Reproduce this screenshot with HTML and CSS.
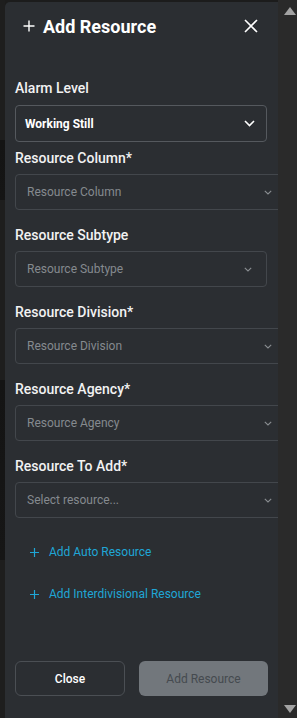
FILE: index.html
```html
<!DOCTYPE html>
<html lang="en">
<head>
    <meta charset="UTF-8">
    <meta name="viewport" content="width=device-width, initial-scale=1.0">
    <title>Add Resource</title>
    <link rel="stylesheet" href="styles.css">
</head>
<body>
    <div class="Backdrop"></div>
    <div class="Panel">
        <div class="Header">
            <div class="Title">
                <svg width="12" height="12" viewBox="0 0 12 12"><path d="M6 0.5V11.5M0.5 6H11.5" stroke="#fff" stroke-width="1.4"/></svg>
                <span>Add Resource</span>
            </div>
            <svg class="CloseIcon" width="14" height="14" viewBox="0 0 14 14"><path d="M1 1L13 13M13 1L1 13" stroke="#fff" stroke-width="1.6"/></svg>
        </div>

        <div class="Field small">
            <p class="Label">Alarm Level</p>
            <div class="Select filled">
                <span>Working Still</span>
                <svg width="11" height="7" viewBox="0 0 11 7"><path d="M1 1L5.5 5.5L10 1" stroke="#fff" stroke-width="1.6" fill="none"/></svg>
            </div>
        </div>
        <div class="Field">
            <p class="Label">Resource Column*</p>
            <div class="Select wide">
                <span>Resource Column</span>
                <svg width="8" height="5" viewBox="0 0 8 5"><path d="M0.8 0.8L4 4L7.2 0.8" stroke="#8a8e92" stroke-width="1.1" fill="none"/></svg>
            </div>
        </div>
        <div class="Field">
            <p class="Label">Resource Subtype</p>
            <div class="Select">
                <span>Resource Subtype</span>
                <svg width="8" height="5" viewBox="0 0 8 5"><path d="M0.8 0.8L4 4L7.2 0.8" stroke="#8a8e92" stroke-width="1.1" fill="none"/></svg>
            </div>
        </div>
        <div class="Field">
            <p class="Label">Resource Division*</p>
            <div class="Select wide">
                <span>Resource Division</span>
                <svg width="8" height="5" viewBox="0 0 8 5"><path d="M0.8 0.8L4 4L7.2 0.8" stroke="#8a8e92" stroke-width="1.1" fill="none"/></svg>
            </div>
        </div>
        <div class="Field">
            <p class="Label">Resource Agency*</p>
            <div class="Select wide">
                <span>Resource Agency</span>
                <svg width="8" height="5" viewBox="0 0 8 5"><path d="M0.8 0.8L4 4L7.2 0.8" stroke="#8a8e92" stroke-width="1.1" fill="none"/></svg>
            </div>
        </div>
        <div class="Field">
            <p class="Label">Resource To Add*</p>
            <div class="Select wide">
                <span>Select resource...</span>
                <svg width="8" height="5" viewBox="0 0 8 5"><path d="M0.8 0.8L4 4L7.2 0.8" stroke="#8a8e92" stroke-width="1.1" fill="none"/></svg>
            </div>
        </div>

        <div class="Links">
            <a class="AddLink">
                <svg width="9" height="9" viewBox="0 0 9 9"><path d="M4.5 0V9M0 4.5H9" stroke="#1fa6d6" stroke-width="1.2"/></svg>
                <span>Add Auto Resource</span>
            </a>
            <a class="AddLink">
                <svg width="9" height="9" viewBox="0 0 9 9"><path d="M4.5 0V9M0 4.5H9" stroke="#1fa6d6" stroke-width="1.2"/></svg>
                <span>Add Interdivisional Resource</span>
            </a>
        </div>

        <div class="Buttons">
            <button class="BtnClose">Close</button>
            <button class="BtnAdd">Add Resource</button>
        </div>
    </div>
    <div class="Scrollbar">
        <div class="ArrowUp"></div>
        <div class="ArrowDown"></div>
    </div>
</body>
</html>
```

FILE: styles.css
```css
*{
    box-sizing: border-box;
    margin: 0;
    padding: 0;
}
body{
    display: flex;
    height: 718px;
    overflow: hidden;
    background-color: #1c1c1c;
    font-family: Roboto, "Liberation Sans", sans-serif;
    color: #f2f2f2;
}
.Backdrop{
    width: 5px;
    background: linear-gradient(#1e1e1e 0, #1e1e1e 140px, #141414 140px, #151515 200px, #1e1e1e 200px, #1e1e1e 380px, #141414 380px, #161616 560px, #1e1e1e 560px);
}
.Panel{
    width: 273px;
    margin-top: 2px;
    background-color: #2b2e32;
    border-top-left-radius: 5px;
    overflow: hidden;
    display: flex;
    flex-direction: column;
    padding-left: 10px;
}
.Header{
    display: flex;
    align-items: center;
    justify-content: space-between;
    height: 48px;
    padding-left: 8px;
    padding-right: 20px;
    margin-bottom: 28px;
}
.Title{
    display: flex;
    align-items: center;
    gap: 8px;
    font-size: 18px;
    font-weight: 700;
    color: #fff;
}
.Field{
    margin-bottom: 15px;
}
.Field.small{
    margin-bottom: 6px;
}
.Label{
    font-size: 14px;
    line-height: 20px;
    font-weight: 500;
    margin-bottom: 6px;
}
.Field.small .Label{
    margin-bottom: 7px;
}
.Select{
    width: 252px;
    height: 36px;
    border: 1px solid #43474c;
    border-radius: 4px;
    display: flex;
    align-items: center;
    justify-content: space-between;
    padding: 0 14px 0 11px;
    font-size: 12px;
    color: #858a8f;
}
.Select.wide{
    width: 272px;
}
.Select.filled{
    height: 37px;
    border-color: #55595e;
    color: #fff;
    font-weight: 700;
    padding: 0 11px 0 9px;
}
.Links{
    display: flex;
    flex-direction: column;
    gap: 26px;
    padding-left: 15px;
    margin-top: 11px;
}
.AddLink{
    display: flex;
    align-items: center;
    gap: 10px;
    font-size: 12px;
    line-height: 16px;
    color: #1fa6d6;
}
.Buttons{
    margin-top: auto;
    margin-bottom: 22px;
    display: flex;
    gap: 14px;
    width: 253px;
}
button{
    height: 35px;
    border-radius: 6px;
    font-family: Roboto, "Liberation Sans", sans-serif;
    font-size: 12px;
}
.BtnClose{
    width: 110px;
    background: none;
    border: 1px solid #4b4f54;
    color: #fff;
    font-weight: 500;
}
.BtnAdd{
    flex: 1;
    border: none;
    background-color: #72777c;
    color: #454a4f;
}
.Scrollbar{
    width: 19px;
    background-color: #2a2a2a;
    display: flex;
    flex-direction: column;
    justify-content: space-between;
    align-items: center;
    padding: 7px 0 5px 4px;
}
.ArrowUp{
    width: 0;
    height: 0;
    border-left: 6px solid transparent;
    border-right: 6px solid transparent;
    border-bottom: 8px solid #a3a3a3;
}
.ArrowDown{
    width: 0;
    height: 0;
    border-left: 6px solid transparent;
    border-right: 6px solid transparent;
    border-top: 8px solid #a3a3a3;
}
```
